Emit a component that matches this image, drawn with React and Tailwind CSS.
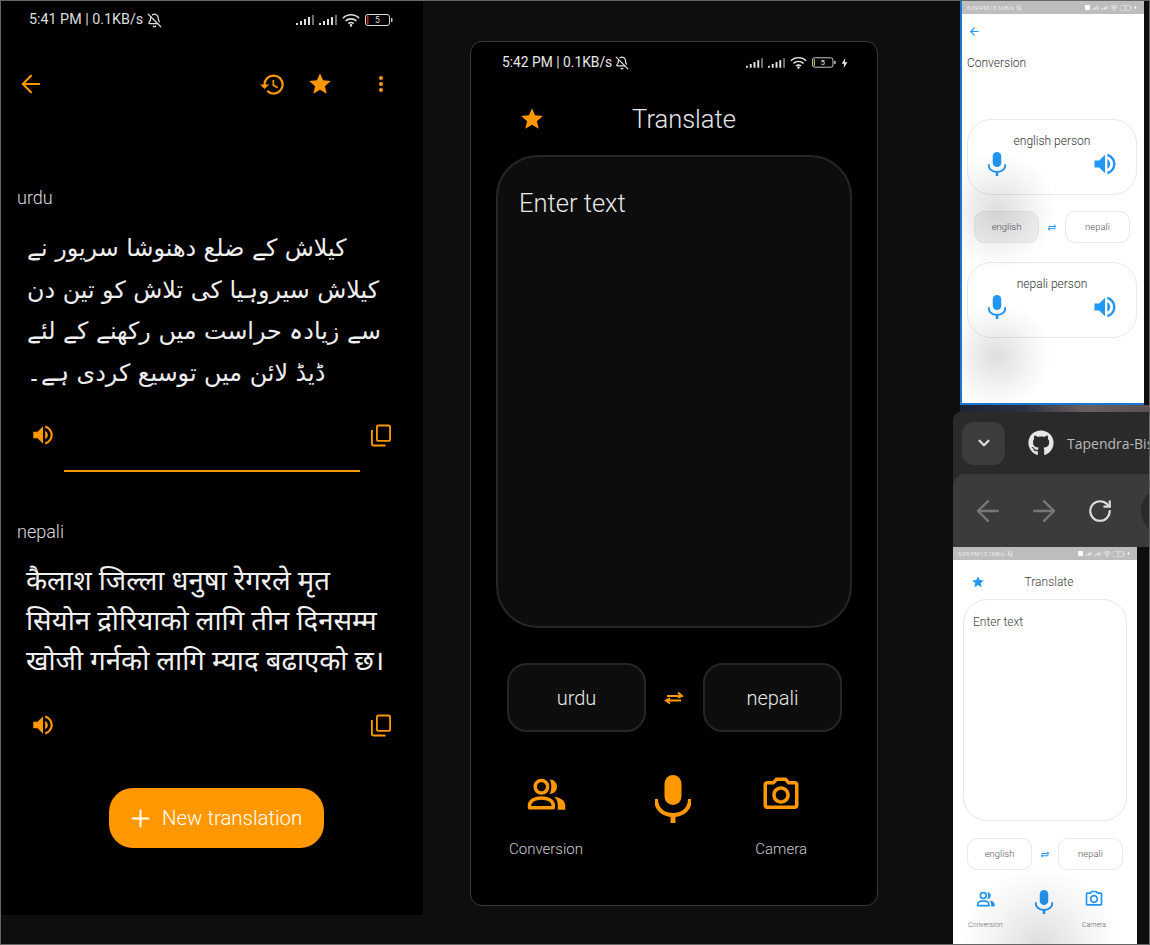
import React from "react";
import { ArrowLeft, ArrowRight, BellOff, ChevronDown, Plus, RotateCw } from "lucide-react";
import { FaGithub } from "react-icons/fa";
import {
  MdHistory,
  MdMoreVert,
  MdOutlinePhotoCamera,
  MdStar,
  MdVolumeUp,
} from "react-icons/md";

const urduLines = [
  "کیلاش کے ضلع دھنوشا سریور نے",
  "کیلاش سیروہیا کی تلاش کو تین دن",
  "سے زیادہ حراست میں رکھنے کے لئے",
  "ڈیڈ لائن میں توسیع کردی ہے۔",
];

const nepaliLines = [
  "कैलाश जिल्ला धनुषा रेगरले मृत",
  "सियोन द्रोरियाको लागि तीन दिनसम्म",
  "खोजी गर्नको लागि म्याद बढाएको छ।",
];

const Signal = ({ className }) => (
  <svg viewBox="0 0 18 10" className={className} fill="currentColor">
    <rect x="0" y="8" width="2" height="2" />
    <rect x="4" y="6" width="2" height="4" />
    <rect x="8" y="4" width="2" height="6" />
    <rect x="12" y="2" width="2" height="8" />
    <rect x="16" y="0" width="2" height="10" opacity="0.5" />
  </svg>
);

const Wifi = ({ className }) => (
  <svg viewBox="0 0 20 14" className={className} fill="none" stroke="currentColor" strokeWidth="1.7">
    <path d="M1 5 C6 0 14 0 19 5" />
    <path d="M4 8 C7.5 5 12.5 5 16 8" />
    <path d="M7 11 C8.8 9.6 11.2 9.6 13 11" />
    <circle cx="10" cy="13" r="0.6" fill="currentColor" />
  </svg>
);

const Battery = ({ className, bar }) => (
  <svg viewBox="0 0 28 12" className={className} fill="none">
    <rect x="0.5" y="0.5" width="24" height="11" rx="2.5" stroke="currentColor" />
    <rect x="2" y="2" width="1.5" height="8" fill={bar} />
    <rect x="26" y="4" width="1.5" height="4" rx="0.7" fill="currentColor" />
    <text x="12.5" y="9.2" fontSize="8.5" textAnchor="middle" fill="currentColor" fontFamily="Roboto, sans-serif">
      5
    </text>
  </svg>
);

const Bolt = ({ className }) => (
  <svg viewBox="0 0 8 12" className={className} fill="currentColor">
    <path d="M5 0 L0.5 7 H3.5 L3 12 L7.5 5 H4.5 Z" />
  </svg>
);

const CopyIcon = ({ className }) => (
  <svg viewBox="0 0 22 24" className={className} fill="none" stroke="currentColor" strokeWidth="2" strokeLinejoin="round">
    <rect x="6.5" y="1" width="14.5" height="17" rx="2" />
    <path d="M1 6 V21 C1 22.2 1.8 23 3 23 H16" />
  </svg>
);

const SwapIcon = ({ className }) => (
  <svg viewBox="0 0 20 14" className={className} fill="none" stroke="currentColor" strokeWidth="2">
    <path d="M3 5 H17 M14 1.5 L18 5 L14 6.5" />
    <path d="M17 9.5 H3 M6 7.5 L2 9.5 L6 12.5" />
  </svg>
);

const MicIcon = ({ className }) => (
  <svg viewBox="0 0 36 48" className={className} fill="currentColor">
    <rect x="9.5" y="0" width="17" height="30" rx="8.5" />
    <path d="M1 24 C1 34 8 40 18 40 C28 40 35 34 35 24" fill="none" stroke="currentColor" strokeWidth="4" />
    <rect x="15.5" y="38" width="5" height="10" />
  </svg>
);

const PeopleIcon = ({ className }) => (
  <svg viewBox="0 0 24 24" className={className} fill="none" stroke="currentColor" strokeWidth="1.9">
    <circle cx="9.5" cy="7.5" r="3.4" />
    <path d="M3 19 V17.8 C3 15 6.3 13.6 9.5 13.6 S16 15 16 17.8 V19 Z" strokeLinejoin="round" />
    <path d="M14 3.6 C16.5 3.6 18 5.4 18 7.5 S16.5 11.4 14 11.4 C15.2 9.2 15.2 5.8 14 3.6 Z" fill="currentColor" stroke="none" />
    <path d="M16.5 13 C19.5 13.4 22.5 14.9 22.5 17.6 V20 H18.4 V17.6 C18.4 15.8 17.8 14.3 16.5 13 Z" fill="currentColor" stroke="none" />
  </svg>
);

const Smudge = ({ className }) => (
  <div
    className={`absolute rounded-full bg-[radial-gradient(circle,rgba(0,0,0,0.13)_0%,rgba(0,0,0,0.04)_45%,rgba(0,0,0,0)_70%)] ${className}`}
  />
);

const LightStatusBar = ({ time }) => (
  <div className="h-[13px] shrink-0 bg-[#bdbdbd] text-white flex items-center justify-between pl-[5px] pr-[7px] text-[6px] leading-none">
    <div className="flex items-center gap-[2px]">
      <span>{time}</span>
      <BellOff className="w-[6px] h-[6px]" />
    </div>
    <div className="flex items-center gap-[2px]">
      <div className="w-[5px] h-[5px] bg-white rounded-[1px]" />
      <Signal className="w-[7px] h-[5px]" />
      <Signal className="w-[7px] h-[5px]" />
      <Wifi className="w-[8px] h-[6px]" />
      <Battery className="w-[12px] h-[6px]" bar="#8bc34a" />
      <Bolt className="w-[3px] h-[5px]" />
    </div>
  </div>
);

const PersonCard = ({ title }) => (
  <div className="h-[76px] rounded-[24px] border border-[#e8e8e8] flex flex-col items-center pt-[14px]">
    <span className="text-[12px] leading-[15px] text-[#333]">{title}</span>
    <div className="w-full flex justify-between items-center mt-[1px] pl-[20px] pr-[17px] text-[#2196f3]">
      <MicIcon className="w-[18px] h-[24px]" />
      <MdVolumeUp size={28} />
    </div>
  </div>
);

const SmallLang = ({ children, className = "" }) => (
  <div className={`w-[65px] h-[32px] rounded-[10px] border border-[#e8e8e8] flex items-center justify-center text-[9.5px] text-[#555] ${className}`}>
    {children}
  </div>
);

export default function App() {
  return (
    <div className="relative w-[1150px] h-[945px] flex overflow-hidden box-border border border-[#666] bg-[#0e0e0e] font-['Roboto',sans-serif] font-light">
      {/* LEFT PHONE */}
      <div className="w-[422px] h-[914px] shrink-0 bg-black text-[#ddd] flex flex-col">
        <div className="h-[38px] flex items-center justify-between pl-[28px] pr-[30px] text-[14.3px] font-normal">
          <div className="flex items-center gap-[4px]">
            <span>5:41 PM | 0.1KB/s</span>
            <BellOff className="w-[15px] h-[15px]" />
          </div>
          <div className="flex items-center gap-[5px]">
            <Signal className="w-[18px] h-[10px]" />
            <Signal className="w-[18px] h-[10px]" />
            <Wifi className="w-[18px] h-[14px]" />
            <Battery className="w-[28px] h-[12px]" bar="#c62828" />
          </div>
        </div>
        <div className="h-[90px] flex items-center text-[#ff9800] pl-[16px] pr-[30px]">
          <ArrowLeft className="w-[28px] h-[28px]" strokeWidth={1.8} />
          <MdHistory size={27} className="ml-auto" />
          <MdStar size={26} className="ml-[21px]" />
          <MdMoreVert size={24} className="ml-[36px]" />
        </div>

        <div className="mt-[56px] pl-[16px] text-[18px] leading-[26px]">urdu</div>
        <div className="mt-[17px] pl-[26px] text-[#eee] text-[23.8px] leading-[41.5px] font-['DejaVu_Sans',sans-serif] font-normal">
          {urduLines.map((line) => (
            <div key={line} dir="rtl" className="whitespace-nowrap text-left">{line}</div>
          ))}
        </div>
        <div className="mt-[28px] flex items-center justify-between pl-[29px] pr-[31px] text-[#ff9800]">
          <MdVolumeUp size={26} />
          <CopyIcon className="w-[20px] h-[23px] mr-[1px]" />
        </div>
        <div className="mt-[22px] ml-[63px] w-[296px] h-[2px] bg-[#ff9800]" />

        <div className="mt-[47px] pl-[16px] text-[18px] leading-[26px]">nepali</div>
        <div className="mt-[15px] pl-[25px] text-[#f0f0f0] text-[27.5px] leading-[40px] font-['Noto_Sans','DejaVu_Sans',sans-serif] font-normal">
          {nepaliLines.map((line) => (
            <div key={line} className="whitespace-nowrap">{line}</div>
          ))}
        </div>
        <div className="mt-[32px] flex items-center justify-between pl-[29px] pr-[31px] text-[#ff9800]">
          <MdVolumeUp size={26} />
          <CopyIcon className="w-[20px] h-[23px] mr-[1px]" />
        </div>
        <div className="mt-[50px] ml-[108px] w-[215px] h-[60px] rounded-[24px] bg-[#ff9800] text-white flex items-center pl-[18px] text-[20.4px]">
          <Plus className="w-[27px] h-[27px]" strokeWidth={1.8} />
          <span className="ml-[8px]">New translation</span>
        </div>
      </div>

      {/* CENTER PHONE */}
      <div className="ml-[47px] mt-[40px] w-[408px] h-[865px] shrink-0 rounded-[12px] border border-[#3a3a3a] bg-black text-[#e8e8e8] flex flex-col">
        <div className="h-[39px] mt-[1px] flex items-center justify-between pl-[31px] pr-[29px] text-[13.8px] font-normal">
          <div className="flex items-center gap-[3px]">
            <span>5:42 PM | 0.1KB/s</span>
            <BellOff className="w-[14px] h-[14px]" />
          </div>
          <div className="flex items-center gap-[5px]">
            <Signal className="w-[17px] h-[10px]" />
            <Signal className="w-[17px] h-[10px]" />
            <Wifi className="w-[17px] h-[13px]" />
            <Battery className="w-[24px] h-[11px]" bar="#8bc34a" />
            <Bolt className="w-[7px] h-[10px]" />
          </div>
        </div>
        <div className="relative h-[72px] mt-[1px] flex items-center justify-center text-[25.5px]">
          <MdStar size={26} className="absolute left-[48px] text-[#ff9800]" />
          <span className="ml-[20px]">Translate</span>
        </div>
        <div className="mx-[25px] h-[473px] rounded-[42px] border-2 border-[#262626] bg-[#0d0d0d] pl-[21px] pt-[28px] text-[25.5px] leading-[36px]">
          Enter text
        </div>
        <div className="mt-[35px] flex items-center justify-between pl-[36px] pr-[35px]">
          <div className="w-[139px] h-[69px] rounded-[20px] border-2 border-[#262626] bg-[#0d0d0d] flex items-center justify-center text-[20px]">urdu</div>
          <SwapIcon className="w-[20px] h-[14px] text-[#ff9800] mr-[1px]" />
          <div className="w-[139px] h-[69px] rounded-[20px] border-2 border-[#262626] bg-[#0d0d0d] flex items-center justify-center text-[20px]">nepali</div>
        </div>
        <div className="mt-[41px] flex justify-between pl-[38px] pr-[70px] text-[15px] text-[#ccc]">
          <div className="flex flex-col items-center">
            <PeopleIcon className="w-[44px] h-[44px] text-[#ff9800]" />
            <span className="mt-[23px] leading-[18px]">Conversion</span>
          </div>
          <MicIcon className="w-[36px] h-[48px] mt-[2px] ml-[8px] text-[#ff9800]" />
          <div className="flex flex-col items-center">
            <div className="h-[44px] flex items-center">
              <MdOutlinePhotoCamera size={42} className="text-[#ff9800]" />
            </div>
            <span className="mt-[23px] leading-[18px]">Camera</span>
          </div>
        </div>
      </div>

      {/* RIGHT COLUMN */}
      <div className="ml-[75px] flex-1 min-w-0 flex flex-col h-full">
        <div className="relative ml-[7px] w-[184px] h-[404px] shrink-0 bg-white border-l-2 border-b-2 border-[#1976d2] flex flex-col overflow-hidden">
          <LightStatusBar time="6:09 PM | 8.1KB/s" />
          <ArrowLeft className="ml-[6px] mt-[11px] w-[13px] h-[13px] text-[#2196f3]" strokeWidth={2} />
          <div className="ml-[5px] mt-[17px] text-[12px] leading-[16px] text-[#333]">Conversion</div>
          <div className="ml-[5px] mr-[7px] mt-[48px]">
            <PersonCard title="english person" />
          </div>
          <div className="mt-[16px] ml-[12px] mr-[14px] flex items-center justify-between">
            <SmallLang className="bg-[#f1f1f1]">english</SmallLang>
            <SwapIcon className="w-[10px] h-[7px] text-[#2196f3]" />
            <SmallLang>nepali</SmallLang>
          </div>
          <div className="ml-[5px] mr-[7px] mt-[19px]">
            <PersonCard title="nepali person" />
          </div>
          <Smudge className="left-[-24px] top-[150px] w-[120px] h-[120px]" />
          <Smudge className="left-[-20px] top-[300px] w-[110px] h-[110px]" />
        </div>
        <div className="h-[7px] shrink-0 ml-[7px] bg-[linear-gradient(90deg,#1c2533,#2a3240,#6a5f5f,#5a5050)]" />

        <div className="h-[135px] shrink-0 bg-[#2a2a2a] rounded-tl-[8px] flex flex-col">
          <div className="h-[62px] flex items-center pl-[9px] overflow-hidden">
            <div className="w-[43px] h-[43px] shrink-0 rounded-[12px] bg-[#3c3c3c] flex items-center justify-center text-[#ddd]">
              <ChevronDown className="w-[18px] h-[18px]" strokeWidth={3} />
            </div>
            <FaGithub size={26} className="ml-[23px] shrink-0 text-[#e6e6e6]" />
            <span className="ml-[13px] text-[14px] text-[#bbb] font-normal font-['Open_Sans',sans-serif] whitespace-nowrap">Tapendra-Bis</span>
          </div>
          <div className="relative h-[73px] bg-[#3b3b3b] rounded-tl-[12px] flex items-center pl-[18px] overflow-hidden">
            <ArrowLeft className="w-[34px] h-[34px] shrink-0 text-[#777]" strokeWidth={1.6} />
            <ArrowRight className="ml-[22px] w-[34px] h-[34px] shrink-0 text-[#777]" strokeWidth={1.6} />
            <RotateCw className="ml-[26px] w-[26px] h-[26px] shrink-0 text-[#ddd]" strokeWidth={2} />
            <div className="ml-[28px] w-[48px] h-[48px] shrink-0 rounded-full bg-[#2a2a2a]" />
          </div>
        </div>

        <div className="relative w-[184px] flex-1 min-h-0 bg-white flex flex-col overflow-hidden">
          <LightStatusBar time="6:09 PM | 0.1KB/s" />
          <div className="relative h-[39px] pt-[4px] flex items-center justify-center text-[12px] text-[#444]">
            <MdStar size={14} className="absolute left-[18px] text-[#2196f3]" />
            <span className="ml-[8px]">Translate</span>
          </div>
          <div className="mx-[10px] h-[222px] shrink-0 rounded-[24px] border border-[#e8e8e8] pl-[9px] pt-[14px] text-[12px] leading-[16px] text-[#444]">
            Enter text
          </div>
          <div className="mt-[17px] ml-[14px] mr-[14px] flex items-center justify-between">
            <SmallLang>english</SmallLang>
            <SwapIcon className="w-[10px] h-[7px] text-[#2196f3]" />
            <SmallLang>nepali</SmallLang>
          </div>
          <div className="mt-[19px] flex justify-between pl-[15px] pr-[31px] text-[7px] text-[#666]">
            <div className="flex flex-col items-center">
              <PeopleIcon className="w-[21px] h-[21px] text-[#2196f3]" />
              <span className="mt-[11px] leading-[9px]">Conversion</span>
            </div>
            <MicIcon className="w-[18px] h-[24px] mt-[1px] ml-[4px] text-[#2196f3]" />
            <div className="flex flex-col items-center">
              <MdOutlinePhotoCamera size={20} className="text-[#2196f3]" />
              <span className="mt-[12px] leading-[9px]">Camera</span>
            </div>
          </div>
          <Smudge className="left-[7px] top-[318px] w-[160px] h-[160px]" />
        </div>
      </div>
    </div>
  );
}
